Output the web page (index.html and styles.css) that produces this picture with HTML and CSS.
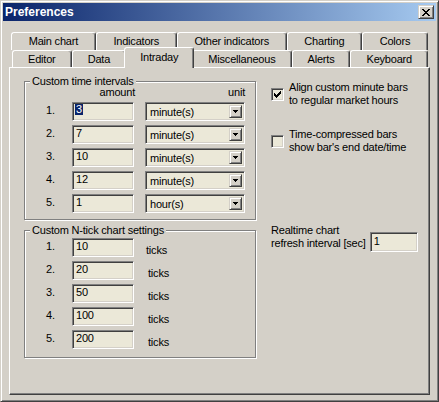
FILE: index.html
```html
<!DOCTYPE html>
<html>
<head>
<meta charset="utf-8">
<title>Preferences</title>
<link rel="stylesheet" href="styles.css">
</head>
<body>
<div class="window">
  <div class="titlebar">
    <span class="title">Preferences</span>
    <div class="close"><svg width="8" height="7" viewBox="0 0 8 7" shape-rendering="crispEdges"><path d="M0 0h2v1h-2z M6 0h2v1h-2z M1 1h2v1h-2z M5 1h2v1h-2z M2 2h4v1h-4z M3 3h2v1h-2z M2 4h4v1h-4z M1 5h2v1h-2z M5 5h2v1h-2z M0 6h2v1h-2z M6 6h2v1h-2z" fill="#000"/></svg></div>
  </div>
  <div class="tabs">
    <div class="tabrow back">
      <div class="tab">Main chart</div>
      <div class="tab">Indicators</div>
      <div class="tab">Other indicators</div>
      <div class="tab">Charting</div>
      <div class="tab">Colors</div>
    </div>
    <div class="tabrow front">
      <div class="tab">Editor</div>
      <div class="tab">Data</div>
      <div class="tab active">Intraday</div>
      <div class="tab">Miscellaneous</div>
      <div class="tab">Alerts</div>
      <div class="tab">Keyboard</div>
    </div>
  </div>
  <div class="panel">
    <div class="col-left">
      <fieldset class="group">
        <legend>Custom time intervals</legend>
        <div class="grid intervals">
          <span></span><span class="hdr hdr-amount">amount</span><span class="hdr hdr-unit">unit</span>
          <span class="num">1.</span><div class="edit"><span class="sel">3</span></div>
          <div class="combo"><span class="combo-text">minute(s)</span><span class="combo-btn"><svg width="5" height="3" viewBox="0 0 5 3" shape-rendering="crispEdges"><path d="M0 0h5v1h-5z M1 1h3v1h-3z M2 2h1v1h-1z" fill="#000"/></svg></span></div>
          <span class="num">2.</span><div class="edit">7</div>
          <div class="combo"><span class="combo-text">minute(s)</span><span class="combo-btn"><svg width="5" height="3" viewBox="0 0 5 3" shape-rendering="crispEdges"><path d="M0 0h5v1h-5z M1 1h3v1h-3z M2 2h1v1h-1z" fill="#000"/></svg></span></div>
          <span class="num">3.</span><div class="edit">10</div>
          <div class="combo"><span class="combo-text">minute(s)</span><span class="combo-btn"><svg width="5" height="3" viewBox="0 0 5 3" shape-rendering="crispEdges"><path d="M0 0h5v1h-5z M1 1h3v1h-3z M2 2h1v1h-1z" fill="#000"/></svg></span></div>
          <span class="num">4.</span><div class="edit">12</div>
          <div class="combo"><span class="combo-text">minute(s)</span><span class="combo-btn"><svg width="5" height="3" viewBox="0 0 5 3" shape-rendering="crispEdges"><path d="M0 0h5v1h-5z M1 1h3v1h-3z M2 2h1v1h-1z" fill="#000"/></svg></span></div>
          <span class="num">5.</span><div class="edit">1</div>
          <div class="combo"><span class="combo-text">hour(s)</span><span class="combo-btn"><svg width="5" height="3" viewBox="0 0 5 3" shape-rendering="crispEdges"><path d="M0 0h5v1h-5z M1 1h3v1h-3z M2 2h1v1h-1z" fill="#000"/></svg></span></div>
        </div>
      </fieldset>
      <fieldset class="group group-ticks">
        <legend>Custom N-tick chart settings</legend>
        <div class="grid ticks">
          <span class="num">1.</span><div class="edit">10</div><span class="unit-label first">ticks</span>
          <span class="num">2.</span><div class="edit">20</div><span class="unit-label">ticks</span>
          <span class="num">3.</span><div class="edit">50</div><span class="unit-label">ticks</span>
          <span class="num">4.</span><div class="edit">100</div><span class="unit-label">ticks</span>
          <span class="num">5.</span><div class="edit">200</div><span class="unit-label">ticks</span>
        </div>
      </fieldset>
    </div>
    <div class="col-right">
      <div class="check">
        <span class="box"><svg width="7" height="7" viewBox="0 0 7 7" shape-rendering="crispEdges"><path d="M6 0h1v1h-1z M5 1h2v1h-2z M0 2h1v1h-1z M4 2h3v1h-3z M0 3h2v1h-2z M3 3h3v1h-3z M0 4h5v1h-5z M1 5h3v1h-3z M2 6h1v1h-1z" fill="#000"/></svg></span>
        <span class="lbl">Align custom minute bars<br>to regular market hours</span>
      </div>
      <div class="check">
        <span class="box"></span>
        <span class="lbl">Time-compressed bars<br>show bar's end date/time</span>
      </div>
      <div class="realtime">
        <span class="lbl">Realtime chart<br>refresh interval [sec]</span>
        <div class="edit edit-wide">1</div>
      </div>
    </div>
  </div>
</div>
</body>
</html>
```

FILE: styles.css
```css
* { box-sizing: border-box; }
html, body { margin: 0; padding: 0; }
body {
  width: 439px;
  height: 402px;
  overflow: hidden;
  background: #D4D0C8;
  font-family: "Liberation Sans", Arial, sans-serif;
  font-size: 11px;
  letter-spacing: -0.2px;
  color: #000;
}

.window {
  width: 439px;
  height: 402px;
  background: #D4D0C8;
  border: 1px solid;
  border-color: #D4D0C8 #404040 #404040 #D4D0C8;
  box-shadow: inset 1px 1px 0 #fff, inset -1px -1px 0 #808080;
  padding: 2px;
  display: flex;
  flex-direction: column;
}

.titlebar {
  flex: none;
  height: 18px;
  background: linear-gradient(to right, #0A246A, #A6CAF0);
  display: flex;
  align-items: center;
  justify-content: space-between;
  padding: 0 2px;
}
.title {
  color: #fff;
  font-weight: bold;
  font-size: 12px;
  letter-spacing: 0;
  line-height: 18px;
}
.close {
  width: 16px;
  height: 14px;
  background: #D4D0C8;
  border: 1px solid;
  border-color: #D4D0C8 #404040 #404040 #D4D0C8;
  box-shadow: inset 1px 1px 0 #fff, inset -1px -1px 0 #808080;
  display: flex;
  align-items: center;
  justify-content: center;
}
.close svg { display: block; }

/* tabs */
.tabs { flex: none; margin-top: 11px; }
.tabrow { display: flex; }
.tabrow.back { margin-left: 8px; width: 417px; height: 18px; }
.tabrow.front { margin-left: 9px; width: 416px; height: 17px; }
.tab {
  flex: 1 1 auto;
  padding: 0 4px;
  text-align: center;
  white-space: nowrap;
  background: #D4D0C8;
  border: 1px solid;
  border-bottom: 0;
  border-color: #fff #404040 transparent #fff;
  border-radius: 3px 3px 0 0;
  box-shadow: inset -1px 0 0 #808080;
  line-height: 16px;
}
.tab.active {
  position: relative;
  z-index: 1;
  align-self: flex-start;
  margin: -3px -2px 0;
  height: 21px;
  line-height: 19px;
}

/* panel */
.panel {
  flex: none;
  margin-left: 6px;
  width: 421px;
  height: 328px;
  border: 1px solid;
  border-color: #fff #404040 #404040 #fff;
  box-shadow: inset -1px -1px 0 #808080;
  padding: 7px 0 0 14px;
  display: flex;
}
.col-left { width: 232px; flex: none; }

.group {
  margin: 0;
  padding: 0 0 6px 0;
  width: 232px;
  min-width: 0;
  border: 1px solid #808080;
  box-shadow: 1px 1px 0 #fff, inset 1px 1px 0 #fff;
}
.group legend {
  margin-left: 5px;
  padding: 0 2px;
  line-height: 13px;
  background: #D4D0C8;
}
.group-ticks { margin-top: 4px; padding-bottom: 8px; }

.grid {
  display: grid;
  grid-template-columns: 26px 73px 100px;
  padding-left: 21px;
  row-gap: 4px;
}
.intervals {
  margin-top: -2px;
  grid-template-rows: 12px;
  grid-auto-rows: 19px;
}
.ticks {
  margin-top: 1px;
  grid-auto-rows: 19px;
}
.hdr { line-height: 12px; justify-self: end; }
.hdr-amount { margin-right: 10px; }
.num { line-height: 13px; margin-top: 2px; align-self: start; }
.unit-label { line-height: 13px; padding-top: 6px; padding-left: 3px; }
.unit-label.first { padding-left: 1px; }

.edit, .combo, .box {
  background: #EBE8D8;
  border: 1px solid;
  border-color: #808080 #fff #fff #808080;
  box-shadow: inset 1px 1px 0 #404040, inset -1px -1px 0 #D4D0C8;
}
.edit {
  width: 62px;
  height: 19px;
  padding: 1px 0 0 3px;
  line-height: 13px;
  white-space: nowrap;
}
.sel {
  display: inline-block;
  vertical-align: top;
  height: 11px;
  line-height: 11px;
  margin-left: -1px;
  padding: 0 1px;
  background: #0A246A;
  color: #fff;
}

.combo {
  width: 100px;
  height: 19px;
  display: flex;
  align-items: flex-end;
  padding: 2px 2px 2px 2px;
}
.combo-text { flex: 1; align-self: flex-start; line-height: 13px; padding-left: 2px; margin-top: 1px; }
.combo-btn {
  width: 13px;
  height: 13px;
  background: #D4D0C8;
  border: 1px solid;
  border-color: #D4D0C8 #404040 #404040 #D4D0C8;
  box-shadow: inset 1px 1px 0 #fff, inset -1px -1px 0 #808080;
  display: flex;
  align-items: center;
  justify-content: center;
}
.combo-btn svg { display: block; }

/* right column */
.col-right {
  margin-left: 15px;
  display: flex;
  flex-direction: column;
}
.check {
  display: flex;
  align-items: center;
  gap: 5px;
  line-height: 13px;
  margin-top: 6px;
}
.check + .check { margin-top: 21px; }
.box {
  flex: none;
  width: 13px;
  height: 13px;
  display: flex;
  align-items: center;
  justify-content: center;
}
.box svg { display: block; }
.realtime {
  margin-top: 70px;
  display: flex;
  align-items: flex-end;
  line-height: 13px;
}
.edit-wide {
  width: 48px;
  height: 20px;
  margin-left: 4px;
  margin-bottom: -2px;
  padding-top: 2px;
}
```
